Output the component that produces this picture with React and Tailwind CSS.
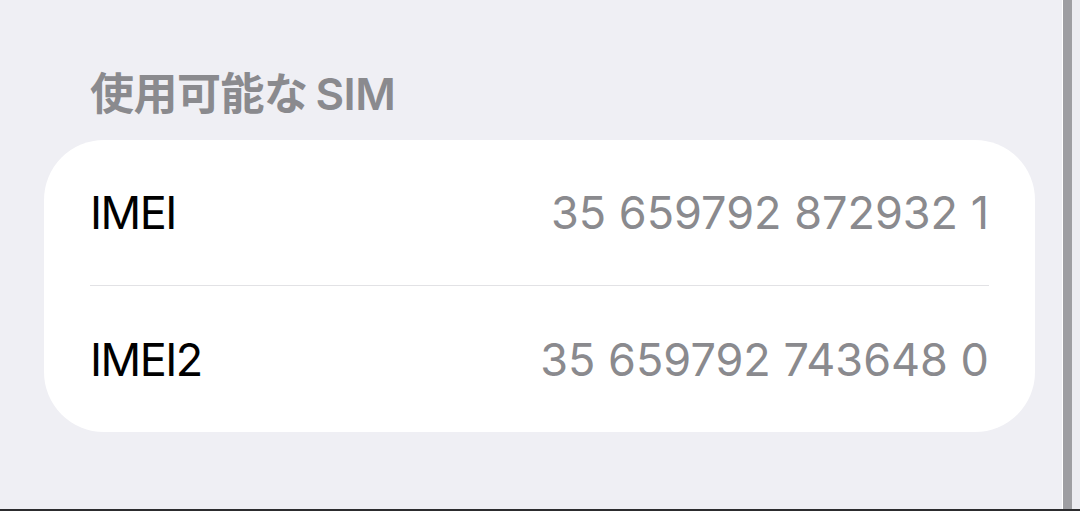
export default function App() {
  return (
    <div className="w-[1080px] h-[511px] flex flex-col bg-[#efeff4] overflow-hidden" style={{ fontFamily: 'Inter, "Noto Sans CJK JP", sans-serif' }}>
      <div className="flex flex-1 min-h-0">
        <main className="flex-1 pl-[44px] pr-[27px] pt-[72px]">
          <div className="h-[44px] pl-[46px] flex items-center text-[44px] leading-none font-semibold text-[#8a8a8e] tracking-[-0.5px]">
            <span>使用可能な</span>
            <span className="ml-[8px]">SIM</span>
          </div>
          <div className="mt-[24px] bg-white rounded-[60px] flex flex-col">
            <div className="h-[145px] px-[46px] flex items-center justify-between text-[45px] leading-none">
              <span className="text-black tracking-[-1.5px]">IMEI</span>
              <span className="text-[#8a8a8e]">35 659792 872932 1</span>
            </div>
            <div className="mx-[46px] h-px bg-[#e2e2e5]" />
            <div className="h-[146px] px-[46px] flex items-center justify-between text-[45px] leading-none">
              <span className="text-black tracking-[-1.5px]">IMEI2</span>
              <span className="text-[#8a8a8e]">35 659792 743648 0</span>
            </div>
          </div>
        </main>
        <div className="w-px bg-white" />
        <div className="w-[9px] bg-[#9e9ea2]" />
        <div className="w-[8px] bg-[#ececf1]" />
      </div>
      <div className="h-[2px] bg-[#2c2c2e]" />
    </div>
  );
}
